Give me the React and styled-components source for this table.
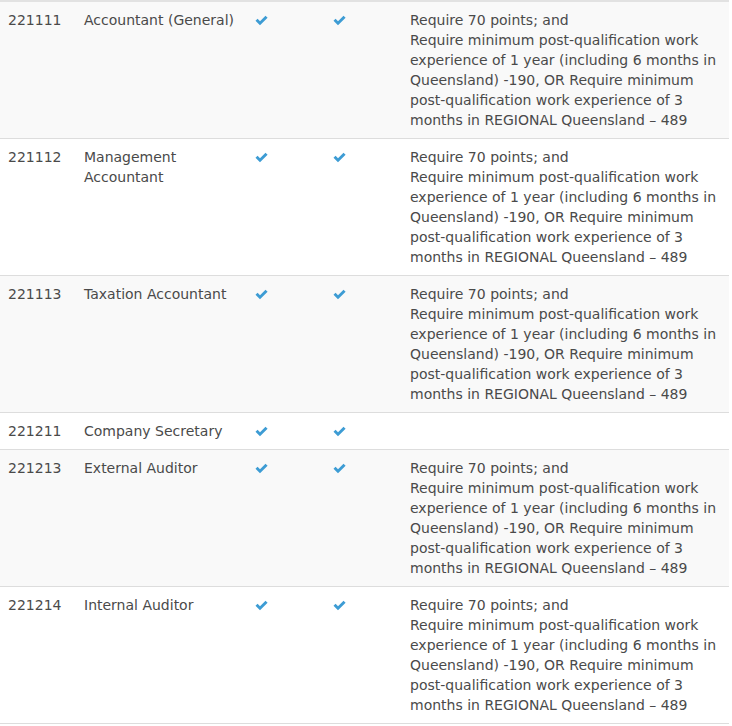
import React from 'react';
import styled, { createGlobalStyle } from 'styled-components';

const GlobalStyle = createGlobalStyle`
  body {
    margin: 0;
    background: #ffffff;
    font-family: "DejaVu Sans", Verdana, sans-serif;
  }
`;

const Table = styled.table`
  width: 729px;
  border-collapse: collapse;
  border-top: 2px solid #e2e2e2;
  font-size: 14px;
  line-height: 20px;
  color: #4a4a4a;
`;

const Row = styled.tr`
  background: ${(p) => (p.$striped ? '#f9f9f9' : '#ffffff')};
  border-bottom: 1px solid #dddddd;
`;

const Cell = styled.td`
  padding: 8px 8px;
  vertical-align: top;
  width: ${(p) => p.$w}px;
  box-sizing: border-box;
`;

const Check = styled.svg`
  display: block;
  width: 13px;
  height: 11px;
  margin-top: 5px;
  fill: #3d9cd4;
`;

function Tick() {
  return (
    <Check viewBox="0 0 13 11">
      <path d="M0.5 5.8 L2.6 3.8 L5 6.2 L10.5 0.8 L12.6 2.8 L5 10.3 Z" />
    </Check>
  );
}

const requirement = (
  <>
    Require 70 points; and
    <br />
    Require minimum post-qualification work experience of 1 year (including 6 months in Queensland) -190, OR Require minimum post-qualification work experience of 3 months in REGIONAL Queensland – 489
  </>
);

const rows = [
  { code: '221111', name: 'Accountant (General)', note: true },
  { code: '221112', name: 'Management Accountant', note: true },
  { code: '221113', name: 'Taxation Accountant', note: true },
  { code: '221211', name: 'Company Secretary', note: false },
  { code: '221213', name: 'External Auditor', note: true },
  { code: '221214', name: 'Internal Auditor', note: true },
];

export default function App() {
  return (
    <>
      <GlobalStyle />
      <Table>
        <tbody>
          {rows.map((row, i) => (
            <Row key={row.code} $striped={i % 2 === 0}>
              <Cell $w={76}>{row.code}</Cell>
              <Cell $w={171}>{row.name}</Cell>
              <Cell $w={78}><Tick /></Cell>
              <Cell $w={77}><Tick /></Cell>
              <Cell $w={327}>{row.note ? requirement : null}</Cell>
            </Row>
          ))}
        </tbody>
      </Table>
    </>
  );
}
